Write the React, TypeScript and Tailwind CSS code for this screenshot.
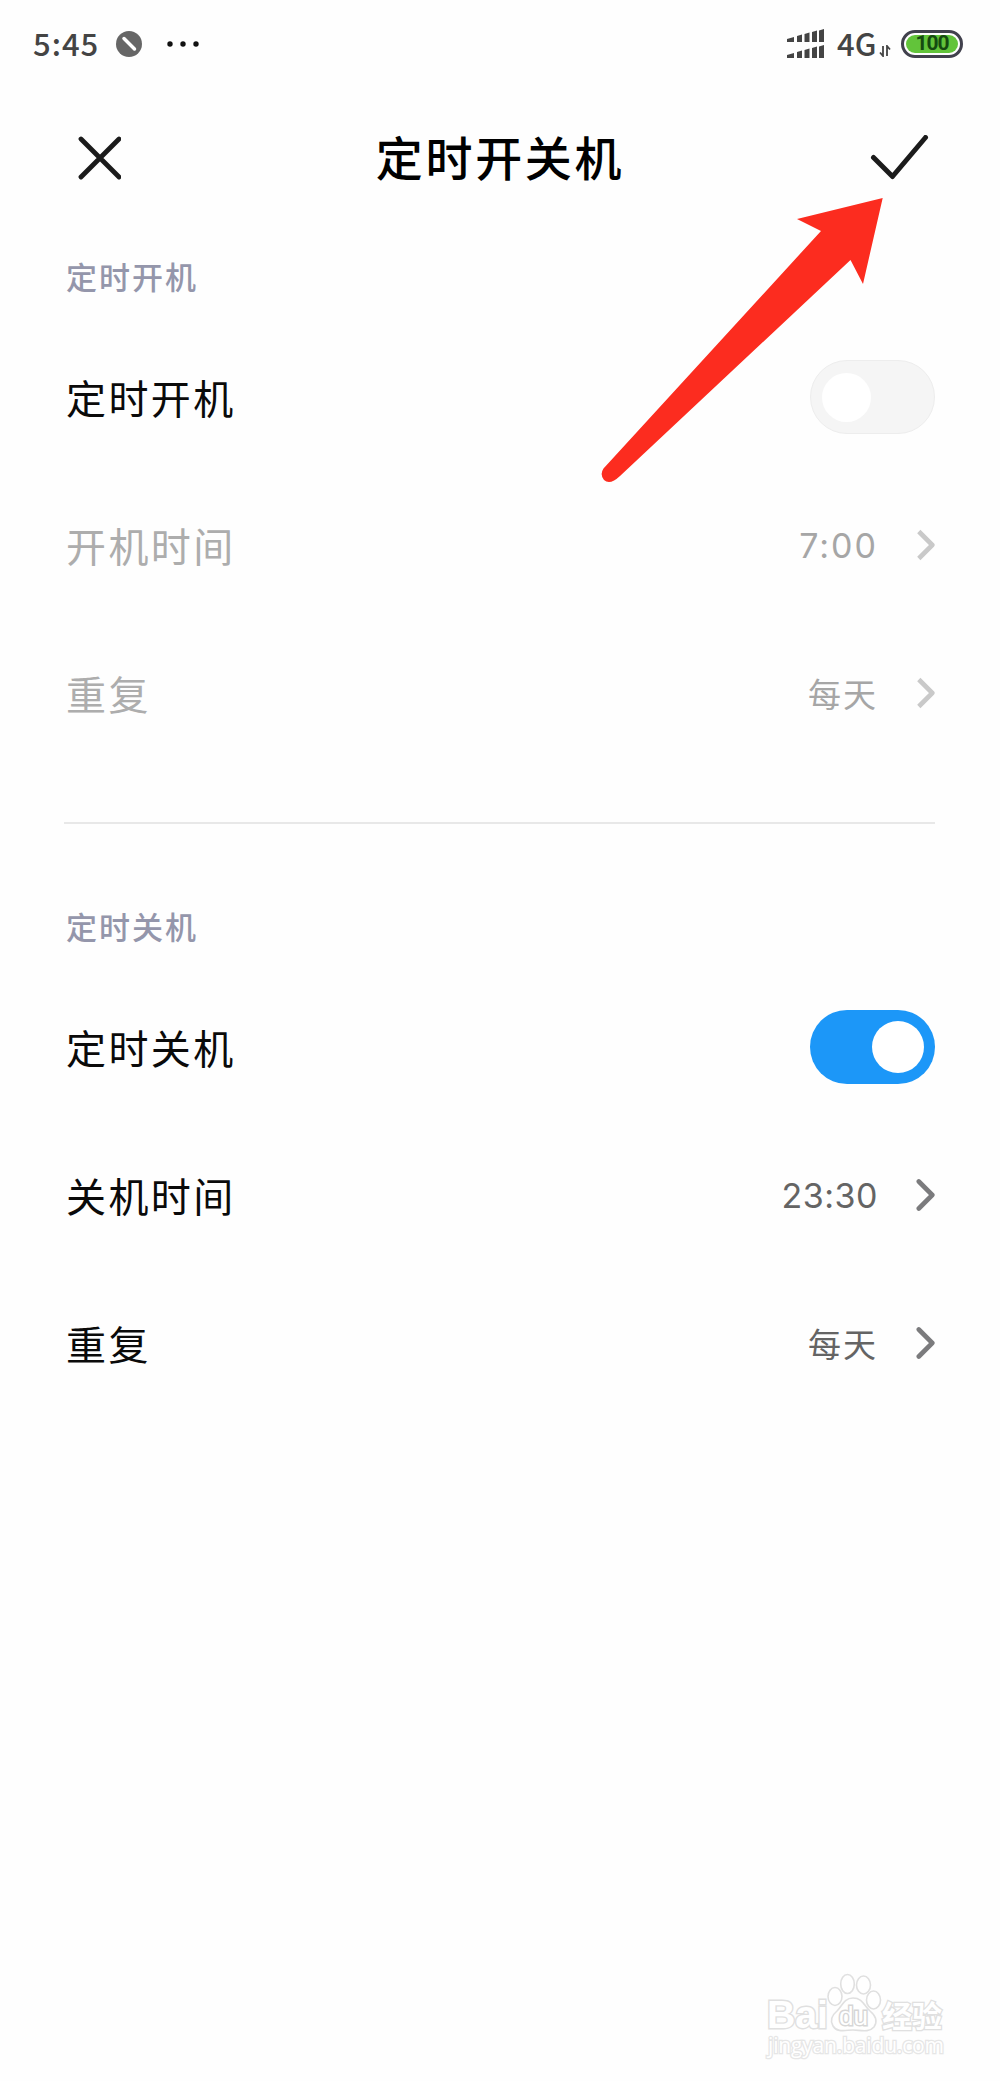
type RowProps = {
  label: string
  value?: string
  valueClass?: string
  on?: boolean
  disabled?: boolean
}

function Switch({ on }: { on?: boolean }) {
  if (on) {
    return (
      <div className="flex h-[74px] w-[125px] items-center justify-end rounded-full bg-[#1c97f8] pr-[11px]">
        <div className="h-[52px] w-[52px] rounded-full bg-white" />
      </div>
    )
  }

  return (
    <div className="flex h-[74px] w-[125px] items-center rounded-full border border-[#ededed] bg-[#f5f5f5] pl-[11px]">
      <div className="h-[49px] w-[49px] rounded-full bg-white" />
    </div>
  )
}

function Chevron({ disabled }: { disabled?: boolean }) {
  return (
    <svg
      className={`ml-[37px] h-[34px] w-[20px] ${disabled ? 'text-[#c9c9c9]' : 'text-[#7b7b7d]'}`}
      viewBox="0 0 20 34"
      fill="none"
      stroke="currentColor"
      strokeWidth="4.600"
      strokeLinecap={disabled ? 'butt' : 'round'}
      strokeLinejoin="round"
    >
      <path d="M3.800 3.500L17.300 17L3.800 30.500" />
    </svg>
  )
}

function Row({ label, value, valueClass = 'text-[33px] tracking-[2px]', on, disabled }: RowProps) {
  return (
    <div className="flex h-[148px] items-center justify-between">
      <span
        className={`text-[40px] leading-none tracking-[2.4px] ${disabled ? 'text-[#adadad]' : 'text-[#0a0a0a]'}`}
      >
        {label}
      </span>
      {value ? (
        <div className="flex items-center">
          <span className={`leading-none ${valueClass} ${disabled ? 'text-[#a6a6a6]' : 'text-[#646464]'}`}>
            {value}
          </span>
          <Chevron disabled={disabled} />
        </div>
      ) : (
        <Switch on={on} />
      )}
    </div>
  )
}

function SectionTitle({ children }: { children: string }) {
  return (
    <h2 className="flex h-[96px] items-center text-[31px] leading-none font-medium tracking-[2px] text-[#9496ab]">
      {children}
    </h2>
  )
}

function StatusBar() {
  return (
    <div className="flex h-[88px] items-center justify-between pr-[37px] pl-[33px] text-[#444]">
      <div className="flex items-center">
        <span className="mb-[3px] w-[83px] text-[31px] leading-none font-medium tracking-[1px]">5:45</span>
        <svg className="h-[26px] w-[26px]" viewBox="0 0 26 26">
          <circle cx="13" cy="13" r="13" fill="#666" />
          <path d="M8 7.500L18.500 18" stroke="#fff" strokeWidth="3.500" strokeLinecap="round" />
        </svg>
        <svg className="ml-[25px] h-[6px] w-[32px]" viewBox="0 0 32 6" fill="#111">
          <circle cx="3" cy="3" r="2.700" />
          <circle cx="16" cy="3" r="2.700" />
          <circle cx="29" cy="3" r="2.700" />
        </svg>
      </div>

      <div className="flex items-center">
        <svg className="h-[30px] w-[38px]" viewBox="0 0 38 30" fill="#444">
          <path d="M0 10l7-2v5H0zM10 7l5-1.500V13h-5zM17.500 5l5-1.500V13h-5zM25 3l5-1.500V13h-5zM32 1.500L37 0v13h-5z" />
          <path d="M0 26l7-2v5H0zM10 23l5-1.500V29h-5zM17.500 21l5-1.500V29h-5zM25 19l5-1.500V29h-5zM32 17.500l5-1.500v13h-5z" />
        </svg>
        <span className="mb-[3px] ml-[12px] w-[42px] text-[31px] leading-none font-medium">4G</span>
        <svg
          className="mt-[13px] h-[12px] w-[12px]"
          viewBox="0 0 12 12"
          fill="none"
          stroke="#444"
          strokeWidth="1.800"
        >
          <path d="M4 1v10L1 7.500M8 11V1l3 3.500" />
        </svg>
        <div className="ml-[10px] flex h-[28px] w-[62px] items-center rounded-full border-[3px] border-[#41414d] p-[2px]">
          <div className="flex h-full w-full items-center justify-center rounded-full bg-[#62c43a] pb-px font-['Roboto',sans-serif] text-[21px] leading-none font-bold tracking-[-1px] text-[#154a10]">
            100
          </div>
        </div>
      </div>
    </div>
  )
}

function Header() {
  return (
    <div className="flex h-[139px] items-center justify-between pr-[71px] pl-[77px]">
      <svg
        className="h-[44px] w-[44px]"
        viewBox="0 0 44 44"
        fill="none"
        stroke="#1b1b1b"
        strokeWidth="4.800"
        strokeLinecap="round"
      >
        <path d="M4 3L42 41M42 3L4 41" />
      </svg>
      <h1 className="mb-[5px] ml-[10px] text-[47px] leading-none font-medium tracking-[2.7px] text-black">
        定时开关机
      </h1>
      <svg
        className="h-[46px] w-[60px]"
        viewBox="0 0 60 46"
        fill="none"
        stroke="#1b1b1b"
        strokeWidth="5"
        strokeLinecap="round"
        strokeLinejoin="round"
      >
        <path d="M4.500 22.500L23.500 41.500L56.500 2.500" />
      </svg>
    </div>
  )
}

function Arrow() {
  return (
    <svg
      className="absolute top-[196px] left-[600px] h-[288px] w-[286px]"
      viewBox="0 0 286 288"
      fill="#fc2c1f"
    >
      <path d="M282.700 2L263 88L250.500 64L20 280Q10 289.500 4 284Q-0.500 278.500 3.500 272.500L221 35L197 23Z" />
    </svg>
  )
}

function Watermark() {
  return (
    <svg
      className="absolute top-[1970px] left-[760px] h-[95px] w-[196px]"
      viewBox="0 0 196 95"
      fill="#fff"
      stroke="#e0e0e0"
      strokeWidth="1.600"
    >
      <text
        className="font-['Liberation_Sans',sans-serif] font-bold"
        x="7"
        y="58"
        fontSize="38"
        textLength="61"
        lengthAdjust="spacingAndGlyphs"
        strokeWidth="2.800"
        paintOrder="stroke"
      >
        Bai
      </text>
      <ellipse cx="75" cy="26.500" rx="7" ry="9" />
      <ellipse cx="87.500" cy="14" rx="6.800" ry="9.500" />
      <ellipse cx="103.500" cy="15" rx="7" ry="9" />
      <ellipse cx="113.500" cy="30" rx="7" ry="9" />
      <path d="M93 28C84 28 82 36 77 41C71 46 70 51 73 56C77 63 86 60 93 60C100 60 109 63 114 57C118 51 116 46 110 41C104 36 103 28 93 28Z" />
      <text
        className="font-['Liberation_Sans',sans-serif]"
        x="79"
        y="55"
        fontSize="25"
        textLength="29"
        lengthAdjust="spacingAndGlyphs"
        stroke="#d6d6d6"
        strokeWidth="2.800"
        paintOrder="stroke"
      >
        du
      </text>
      <text
        className="font-['Noto_Sans_CJK_SC',sans-serif] font-bold"
        x="122"
        y="57"
        fontSize="30"
        strokeWidth="2.600"
        paintOrder="stroke"
      >
        经验
      </text>
      <text
        className="font-['Open_Sans',sans-serif]"
        x="8"
        y="83"
        fontSize="21"
        textLength="176"
        stroke="#e6e6e6"
        strokeWidth="2.600"
        paintOrder="stroke"
      >
        jingyan.baidu.com
      </text>
    </svg>
  )
}

export default function App() {
  return (
    <div className="relative h-[2081px] w-[1000px] overflow-hidden bg-[#fefefe] font-['Noto_Sans_CJK_SC',sans-serif]">
      <StatusBar />
      <Header />

      <div className="pr-[65px] pl-[66px]">
        <SectionTitle>定时开机</SectionTitle>
        <Row label="定时开机" />
        <Row
          label="开机时间"
          value="7:00"
          valueClass="mt-[2px] font-['Inter',sans-serif] text-[34px] tracking-[2px]"
          disabled
        />
        <Row label="重复" value="每天" disabled />
      </div>

      <div className="mt-[55px] mr-[65px] mb-[53px] ml-[64px] h-[2px] bg-[#e8e8e8]" />

      <div className="pr-[65px] pl-[66px]">
        <SectionTitle>定时关机</SectionTitle>
        <Row label="定时关机" on />
        <Row
          label="关机时间"
          value="23:30"
          valueClass="mt-[2px] font-['Inter',sans-serif] text-[34px] tracking-[0.5px]"
        />
        <Row label="重复" value="每天" />
      </div>

      <Arrow />
      <Watermark />
    </div>
  )
}
